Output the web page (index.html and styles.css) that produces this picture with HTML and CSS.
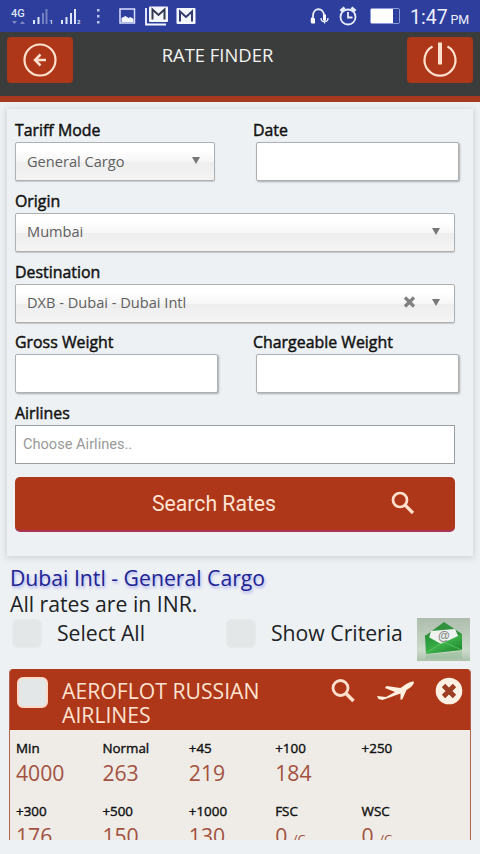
FILE: index.html
```html
<!DOCTYPE html>
<html lang="en">
<head>
<meta charset="utf-8">
<title>Rate Finder</title>
<link rel="stylesheet" href="styles.css">
</head>
<body>
<div class="status">
  <svg class="status-left" width="200" height="32" viewBox="0 0 200 32">
    <g fill="#dfe6ff">
      <text x="11" y="17" class="net">4G</text>
      <path d="M12 21h5l-2.500 3zM20 24h5l-2.500-3z" opacity=".45"/>
      <path d="M33 20h2v4h-2zM37.500 17h2v7h-2zM61 20h2v4h-2zM65.500 17h2v7h-2zM70 13h2v11h-2zM74 9h2v15h-2z"/>
      <path d="M42 13h2v11h-2zM45.500 9h2v15h-2z" opacity=".4"/>
      <text x="49.500" y="24" class="sim">1</text><text x="77" y="24" class="sim">2</text>
      <path d="M97 9h2.500v2.500H97zM97 15h2.500v2.500H97zM97 21h2.500v2.500H97z" opacity=".8"/>
    </g>
    <rect x="120" y="9" width="14.500" height="14" fill="none" stroke="#d9e0ff" stroke-width="1.500"/>
    <path d="M121.500 22v-4l4-2 3 2 2-1 3 2v3z" fill="#f5f7ff"/>
    <path d="M146 8v16.500h20" fill="none" stroke="#f5f7ff" stroke-width="1.800"/>
    <rect x="149" y="6.500" width="19" height="15.500" rx="1" fill="#f5f7ff"/>
    <path d="M152.500 19.500V9.500l6 5.500 6-5.500v10" fill="none" stroke="#333a50" stroke-width="2"/>
    <rect x="176.500" y="8" width="19" height="16" rx="1" fill="#f5f7ff"/>
    <path d="M180 21.500V11.500l6 5.500 6-5.500v10" fill="none" stroke="#333a70" stroke-width="2"/>
  </svg>
  <svg class="status-right" width="100" height="32" viewBox="310 0 100 32">
    <g fill="none" stroke="#e9eeff" stroke-width="1.800">
      <path d="M313 19v-3c0-9 11-9 11 0v3"/>
      <circle cx="348" cy="17" r="7.500"/><path d="M348 12v5.500h4.500"/>
      <path d="M340.500 11l4-3.500M355.500 11l-4-3.500" stroke-width="2.800"/>
    </g>
    <path d="M311 17.500l4 1v5h-2.500c-2 0-2-2-1.500-6zM323 14.500h3v6h-3z" fill="#fff"/>
    <path d="M321 18c0 5 7 5 7 0M324.500 20v3.500" fill="none" stroke="#e9eeff" stroke-width="1.300"/>
    <rect x="370.500" y="8.500" width="29" height="15" rx="1" fill="none" stroke="#8b9bdc"/>
    <path d="M371 9h22v14h-22z" fill="#fff"/>
  </svg>
  <div class="clock">1:47 <span>PM</span></div>
</div>
<header class="header">
  <a class="nav-btn">
    <svg width="36" height="36" viewBox="0 0 36 36" fill="none" stroke="#ffe0cd"><circle cx="18" cy="18" r="15.500" stroke-width="2.200"/><path d="M24 18H13.500M18.500 12.500L13 18l5.500 5.500" stroke-width="2.500"/></svg>
  </a>
  <h1>RATE FINDER</h1>
  <a class="nav-btn">
    <svg width="36" height="36" viewBox="0 0 36 36" fill="none" stroke="#ffe0cd"><path d="M10.500 4.500a15.500 15.500 0 1 0 15 0" stroke-width="2.200"/><path d="M18 .5v22" stroke-width="4"/></svg>
  </a>
</header>
<section class="panel">
  <div class="row">
    <div class="field half"><label>Tariff Mode</label><div class="select"><span>General Cargo</span><i class="arrow"></i></div></div>
    <div class="field right"><label>Date</label><div class="input"></div></div>
  </div>
  <div class="field"><label>Origin</label><div class="select"><span>Mumbai</span><i class="arrow"></i></div></div>
  <div class="field"><label>Destination</label><div class="select"><span>DXB - Dubai - Dubai Intl</span><svg class="clear" width="13" height="12" viewBox="0 0 13 12"><path d="M2 1.500l9 9M11 1.500l-9 9" stroke="#808080" stroke-width="3.200"/></svg><i class="arrow"></i></div></div>
  <div class="row">
    <div class="field half-wide"><label>Gross Weight</label><div class="input"></div></div>
    <div class="field right"><label>Chargeable Weight</label><div class="input"></div></div>
  </div>
  <div class="field"><label>Airlines</label><div class="chooser">Choose Airlines..</div></div>
  <div class="search"><span>Search Rates</span><svg width="24" height="24" viewBox="0 0 24 24" fill="none" stroke="#ffe0cd"><circle cx="9" cy="9" r="7" stroke-width="2.700"/><path d="M14 14l8 8" stroke-width="3.200"/></svg></div>
</section>
<section class="results">
  <h2>Dubai Intl - General Cargo</h2>
  <p>All rates are in INR.</p>
  <div class="options">
    <i class="check"></i><span class="select-all">Select All</span>
    <i class="check"></i><span class="criteria">Show Criteria</span>
    <svg class="mail" width="53" height="43" viewBox="0 0 53 43">
      <defs><linearGradient id="mb" x2="0" y2="1"><stop stop-color="#aebcae"/><stop offset=".75" stop-color="#ccdacb"/><stop offset="1" stop-color="#adc1ad"/></linearGradient><linearGradient id="mg" x2="1" y2="1"><stop stop-color="#208e31"/><stop offset=".5" stop-color="#3aae48"/><stop offset="1" stop-color="#188027"/></linearGradient></defs>
      <path fill="url(#mb)" d="M0 0h53v43H0z"/>
      <path d="M8 18L27 4l18 12-4 10H10z" fill="#33923d"/>
      <path d="M14 13l24-2 4 9-14 8-17-4z" fill="#eef3f0"/>
      <text x="21" y="22" class="at">@</text>
      <path d="M8 17l16 9 21-10v16L9 36z" fill="url(#mg)"/>
      <path d="M9 35l17-11 19 8" fill="none" stroke="#6acb6a" stroke-width=".7"/>
      <path d="M9 37l36-4v8H9z" fill="#8bb88c" opacity=".45"/>
    </svg>
  </div>
  <article class="card">
    <div class="card-head">
      <i class="check light"></i>
      <h3>AEROFLOT RUSSIAN AIRLINES</h3>
      <svg class="icons" width="134" height="30" viewBox="0 0 134 30">
        <g fill="none" stroke="#ffe0cd"><circle cx="10.500" cy="11" r="7.500" stroke-width="2.800"/><path d="M16 16.500l7.500 7.500" stroke-width="3.600"/></g>
        <path d="M47 19l9 1 9-5-10-4 1.500-2 14 2 5-3.500c4-2.500 8-3.500 8.500-2.500 0 3-4 6-7.500 8l-4 9-2 1v-6.500l-11 4-7 2.500-4-1z" fill="#fff0df"/>
        <circle cx="119" cy="14" r="13.300" fill="#fff0e4"/><path d="M113.500 8.500l11 11M124.500 8.500l-11 11" stroke="#9c3e24" stroke-width="4.800"/>
      </svg>
    </div>
    <div class="rates">
      <div><b>Min</b><em>4000</em></div><div><b>Normal</b><em>263</em></div><div><b>+45</b><em>219</em></div><div><b>+100</b><em>184</em></div><div><b>+250</b></div>
      <div><b>+300</b><em>176</em></div><div><b>+500</b><em>150</em></div><div><b>+1000</b><em>130</em></div><div><b>FSC</b><em>0 <small>/C</small></em></div><div><b>WSC</b><em>0 <small>/C</small></em></div>
    </div>
  </article>
</section>
</body>
</html>
```
FILE: styles.css
```css
* { box-sizing: border-box; }
body { margin: 0; width: 480px; height: 854px; overflow: hidden; background: #edf1f3; font-family: "Open Sans", "Noto Sans", sans-serif; color: #202225; }
h1, h2, h3, p { margin: 0; font-weight: 400; }
.status { height: 32px; background: #2d3e9c; display: flex; align-items: center; color: #edf0ff; font-family: Roboto, sans-serif; }
.status-right { margin-left: 110px; }
.net { font: 500 11px Roboto, sans-serif; }
.sim { font: bold 6px Roboto, sans-serif; }
.clock { font-size: 19.5px; white-space: nowrap; padding-top: 2px; }
.clock span { font-size: 12.5px; margin-left: -2px; }
.header { height: 70px; background: #3b3d3c; border-bottom: 6px solid #a63a20; display: flex; justify-content: space-between; align-items: flex-start; padding: 5px 7px 0; }
.nav-btn { width: 66px; height: 46px; border-radius: 4px; background: #ad3718; display: flex; align-items: center; justify-content: center; }
.header h1 { color: #f3f3f1; font-size: 18.4px; line-height: 24px; margin: 6px 45px 0 0; }
.panel { margin: 7px 7px 0; height: 447px; padding: 11px 18px 0 8px; box-shadow: 0 1px 6px 1px #cfd2d7; background: #edf1f3; }
.row { display: flex; justify-content: space-between; }
.field { height: 70.75px; }
.half { width: 200px; }
.half-wide { width: 203px; }
.right { width: 203px; margin-right: -4px; }
.right label { margin-left: -3px; }
label { display: block; height: 22px; line-height: 21px; font-size: 15.9px; white-space: nowrap; color: #111; -webkit-text-stroke: .45px #111; }
.select, .input, .chooser { height: 39px; border: 1px solid #aeb1b3; border-radius: 2px; display: flex; align-items: center; }
.select { padding: 0 14px 2px 11px; background: linear-gradient(#fff 20%, #f6f6f6 50%, #eee 52%, #f4f4f4 100%); font-size: 14.6px; color: #606060; box-shadow: 0 1px 1px #c5c7c8; }
.select span { flex: 1; }
.arrow { border: 5px solid transparent; border-top: 7px solid #777; border-bottom: 0; border-left-width: 4px; border-right-width: 4px; }
.clear { margin-right: 16px; }
.input { background: #fff; box-shadow: 1px 1px 2px #aaa; }
.chooser { background: #fff; border-radius: 0; border-color: #999fa0; padding: 0 7px 1px; color: #999; font: 14.6px Roboto, sans-serif; }
.search { height: 55px; margin-top: 3px; border-radius: 5px; background: #ad3718; border-bottom: 2px solid #ac345b; color: #ffe2d1; font: 21.2px Roboto, sans-serif; display: flex; align-items: center; padding: 0 40px 0 137px; justify-content: space-between; }
.results { padding: 9px 10px 0; height: 284px; overflow: hidden; }
.results h2 { font-size: 21.2px; line-height: 26px; color: #202494; text-shadow: 1px 2px 3px #aaaaf0; margin-bottom: 1px; }
.results p { font-size: 21.2px; line-height: 24px; }
.options { display: flex; height: 52px; font-size: 21.2px; line-height: 28px; padding: 3px 0 0 2px; white-space: nowrap; }
.check { width: 30px; height: 29px; border-radius: 6px; background: #e4e7e8; border: 1px solid #e7e9ea; flex: none; }
.select-all { width: 169px; margin-left: 15px; }
.criteria { width: 131px; margin-left: 15px; }
.mail { margin: -1px 0 0 15px; flex: none; }
.at { font: bold 12px "Liberation Sans", sans-serif; fill: #888; }
.card { height: 200px; margin: 1px 0 0 -1px; border: 2px solid #b6634b; border-width: 0 1px; border-radius: 4px 4px 0 0; background: #efece8; width: 462px; overflow: hidden; }
.card-head { height: 61px; background: #ad3718; display: flex; padding: 8px 6px 0 7px; }
.light { border: 2px solid #ffd9c8; height: 31px; width: 31px; }
.card-head h3 { color: #ffe2d1; font-size: 21.2px; line-height: 24px; width: 215px; margin: 2px 0 0 14px; }
.icons { margin-left: 55px; flex: none; }
.rates { display: grid; grid-template-columns: repeat(5, 86.4px); grid-auto-rows: 62.5px; padding: 9px 0 0 6px; }
.rates b { display: block; font-weight: 400; font-size: 13.4px; line-height: 19px; -webkit-text-stroke: .4px #111; color: #111; }
.rates em { display: block; font-style: normal; font-size: 21.2px; line-height: 30px; color: #a2523f; }
.rates small { font-size: 13px; }
```
